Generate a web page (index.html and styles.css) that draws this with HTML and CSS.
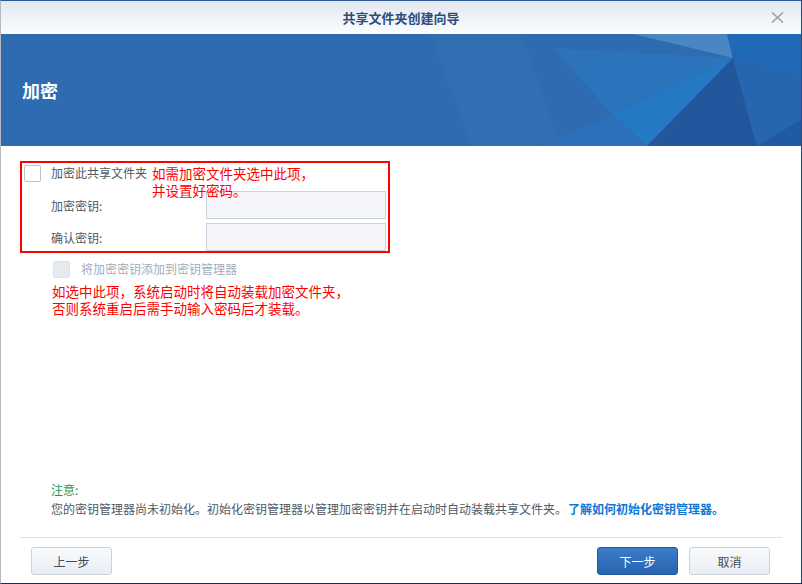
FILE: index.html
```html
<!DOCTYPE html>
<html lang="zh-CN">
<head>
<meta charset="utf-8">
<title>共享文件夹创建向导</title>
<link rel="stylesheet" href="styles.css">
</head>
<body>
<div class="window">
  <header class="titlebar">
    <span class="title">共享文件夹创建向导</span>
    <svg class="close" width="13" height="11" viewBox="0 0 13 11"><path d="M1 0.5 L12 10.5 M12 0.5 L1 10.5" stroke="#9ca1a7" stroke-width="1.6" fill="none"/></svg>
  </header>
  <section class="banner">
    <svg class="banner-art" width="800" height="112" viewBox="0 0 800 112">
      <polygon points="430,0 520,0 560,112 470,112" fill="#ffffff" opacity="0.025"/>
      <polygon points="552,14 732,24 612,81" fill="#2b73bb"/>
      <polygon points="632,0 726,0 732,24" fill="#4a86c2"/>
      <polygon points="726,0 800,0 800,40 732,24" fill="#1f69b6"/>
      <polygon points="612,81 732,24 646,112" fill="#2479c5"/>
      <polygon points="540,112 612,81 646,112" fill="#2b70b8"/>
      <polygon points="732,24 646,112 756,112" fill="#22579d"/>
      <polygon points="732,24 800,40 800,86 756,112" fill="#2566af"/>
      <polygon points="800,86 800,112 756,112" fill="#1f5aa2"/>
    </svg>
    <h1 class="banner-title">加密</h1>
  </section>
  <main class="body">
    <div class="redbox">
      <div class="row row-check">
        <span class="checkbox"></span>
        <span class="label">加密此共享文件夹</span>
      </div>
      <div class="row row-field">
        <span class="field-label">加密密钥:</span>
        <span class="input"></span>
      </div>
      <div class="row row-field row-gap">
        <span class="field-label">确认密钥:</span>
        <span class="input"></span>
      </div>
      <div class="annot annot-top">如需加密文件夹选中此项，<br>并设置好密码。</div>
    </div>
    <div class="row-sub">
      <span class="checkbox disabled"></span>
      <span class="label dim">将加密密钥添加到密钥管理器</span>
    </div>
    <div class="annot annot-bottom">如选中此项，系统启动时将自动装载加密文件夹，<br>否则系统重启后需手动输入密码后才装载。</div>
    <div class="note">
      <div class="note-title">注意:</div>
      <div class="note-text">您的密钥管理器尚未初始化。初始化密钥管理器以管理加密密钥并在启动时自动装载共享文件夹。<a class="link">了解如何初始化密钥管理器。</a></div>
    </div>
  </main>
  <footer class="footer">
    <button class="btn btn-prev">上一步</button>
    <button class="btn btn-primary">下一步</button>
    <button class="btn">取消</button>
  </footer>
</div>
</body>
</html>
```

FILE: styles.css
```css
* { box-sizing: border-box; }
html, body { margin: 0; padding: 0; background: #fff; }
body { font-family: "Noto Sans CJK SC", "Microsoft YaHei", "Noto Sans", sans-serif; }

.window {
  width: 802px;
  height: 584px;
  display: flex;
  flex-direction: column;
  border: 1px solid #b6babf;
  border-top-color: #2b5a94;
  border-bottom-color: #1f2f4d;
  border-right-color: #2b4a74;
  background: #fff;
  overflow: hidden;
}

.titlebar {
  flex: none;
  height: 33px;
  display: grid;
  grid-template-columns: 1fr auto 1fr;
  align-items: center;
  background: linear-gradient(#e2e7ef, #fcfdfe);
}
.title {
  grid-column: 2;
  font-size: 13px;
  font-weight: bold;
  color: #2c4d7e;
}
.close {
  grid-column: 3;
  justify-self: end;
  margin-right: 17px;
}

.banner {
  position: relative;
  flex: none;
  height: 112px;
  background: #2e6bb1;
  display: flex;
  align-items: center;
  padding-left: 21px;
  overflow: hidden;
}
.banner-art { position: absolute; left: 0; top: 0; }
.banner-title {
  position: relative;
  margin: 0;
  font-size: 18px;
  font-weight: bold;
  color: #fff;
}

.body {
  flex: 1;
  display: flex;
  flex-direction: column;
  padding: 15px 19px 19px;
}

.redbox {
  position: relative;
  width: 370px;
  border: 2px solid #ff0000;
}
.row { display: flex; }
.row-check { height: 28px; align-items: flex-start; }
.checkbox {
  flex: none;
  width: 17px;
  height: 17px;
  border: 1px solid #bcc5ce;
  border-radius: 2px;
  background: #fff;
}
.row-check .checkbox { margin: 2px 0 0 2px; }
.label {
  font-size: 12px;
  line-height: 20px;
  color: #4e5964;
  margin-left: 10px;
}
.row-field { height: 28px; align-items: center; padding-left: 29px; }
.row-gap { margin-top: 4px; }
.field-label {
  width: 155px;
  font-size: 12px;
  color: #4e5964;
}
.input {
  width: 180px;
  height: 28px;
  border: 1px solid #c9d3dd;
  background: #f4f6f9;
}

.annot {
  color: #ff0000;
  font-size: 13.5px;
  line-height: 17px;
  white-space: nowrap;
}
.annot-top { position: absolute; left: 130px; top: 2px; }
.annot-bottom { margin: 4px 0 0 32px; }

.row-sub {
  display: flex;
  align-items: center;
  margin: 6px 0 0 33px;
}
.checkbox.disabled { background: #e5eaf0; border-color: #dce2e8; }
.row-sub .label { margin-left: 11px; }
.label.dim { color: #a3adb8; }

.note {
  margin-top: auto;
  padding-left: 31px;
  font-size: 12px;
  line-height: 19px;
  color: #4e5964;
}
.note-title { color: #1b9a5e; }
.link { color: #0c79d6; font-weight: bold; margin-left: 1px; }

.footer {
  flex: none;
  display: flex;
  gap: 11px;
  margin: 0 19px;
  padding: 9px 12px 8px 11px;
  border-top: 1px solid #dce1e7;
}
.btn {
  width: 81px;
  height: 28px;
  padding: 0;
  font-family: inherit;
  font-size: 12px;
  color: #3f4a56;
  border: 1px solid #c9d1db;
  border-radius: 3px;
  background: linear-gradient(#f8fafc, #e9eef4);
}
.btn-prev { margin-right: auto; }
.btn-primary {
  color: #fff;
  border-color: #2459a0;
  background: linear-gradient(#3b7cca, #2864af);
}
```
